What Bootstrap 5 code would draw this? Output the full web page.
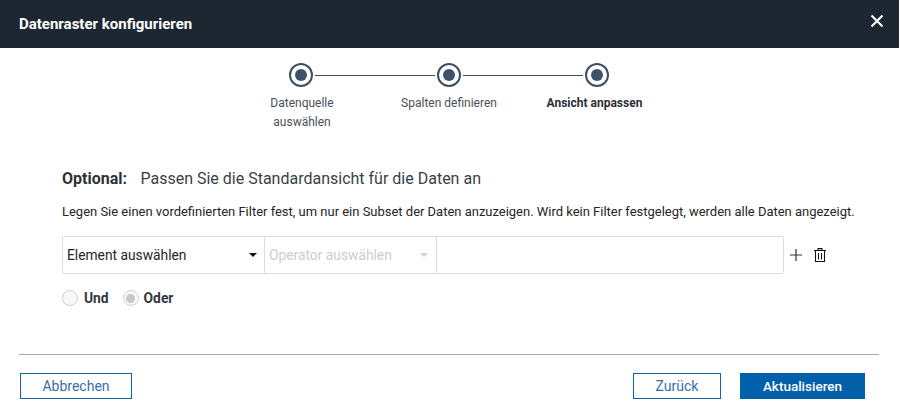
<!DOCTYPE html>
<html lang="de">
<head>
<meta charset="utf-8">
<title>Datenraster konfigurieren</title>
<link href="https://cdn.jsdelivr.net/npm/bootstrap@5.3.0/dist/css/bootstrap.min.css" rel="stylesheet">
<style>
html,body{height:416px;overflow:hidden;background:#fff}
body{font-family:Roboto,"Liberation Sans",sans-serif;color:#252525;width:899px}
.dlg-head{height:48px;background:#1d2731;color:#fff;padding:0 14px 0 19px}
.dlg-title{font-size:15px;font-weight:700;margin:0;line-height:48px}
.dlg-x{background:none;border:0;padding:0;width:16px;height:16px;line-height:0;margin-top:-6px}
.stepper{width:444px;margin:14px 0 0 227px}
.step-col{width:148px;font-size:12px;line-height:19px;color:#4a5057;text-align:center;flex:none}
.step-dot{width:24px;height:24px;border:2px solid #3d4f5f;border-radius:50%;background:#fff;padding:4px;margin:1px auto 7px;position:relative;z-index:1;box-shadow:0 0 0 2px #fff}
.step-dot i{display:block;width:12px;height:12px;border-radius:50%;background:#3d5268}
.step-bar{position:relative}
.step-bar::after{content:"";position:absolute;left:74px;width:296px;top:13px;height:1px;background:#3d4f5f}
.step-col.on{font-weight:700;color:#2b2f33}
.lbl-a{margin-right:-2px}
.lbl-c{margin-left:-5px}
.dlg-body{padding:0 62px}
.opt-line{font-size:16px;line-height:20px;margin-top:37px;color:#3a3f45}
.opt-line b{color:#2e3338;margin-right:9.5px}
.desc{font-size:12.97px;line-height:18px;margin-top:14px;color:#252525;white-space:nowrap}
.filter{margin-top:15px;height:38px}
.filter-box{width:722px;height:38px;border:1px solid #dcdfe2;border-radius:2px}
.fcell{height:100%;font-size:13.8px;padding:0 5px 0 4px;color:#252525}
.fcell+.fcell{border-left:1px solid #dcdfe2}
.f1{width:201px}
.f2{width:172px;color:#c9cfd4}
.f3{flex:1}
.caret{width:0;height:0;border-left:4px solid transparent;border-right:4px solid transparent;border-top:4px solid #111;margin-right:2px}
.f2 .caret{border-top-color:#c9cfd4;margin-right:3px}
.tools{margin-left:6px;gap:12px}
.radios{margin-top:14px;font-size:13.8px;font-weight:700;line-height:20px;color:#33383d;gap:14px}
.rd{width:16px;height:16px;border:1px solid #d2d2d2;border-radius:50%;background:#f8f8f8;margin-right:5px;display:flex;align-items:center;justify-content:center}
.rd.r1{margin-right:6px}
.rd i{display:block;width:9px;height:9px;border-radius:50%;background:#c8c8c8}
.rule{height:1px;background:#a9a9a9;margin:46px 20px 0 19px}
.foot{padding:18px 34px 0 20px}
.bt{border-radius:0;height:26px;padding:0;font-size:14px;line-height:24px;border:1px solid #0f62a8;color:#3b6fa5;background:#fff}
.bt.w1{width:112px}
.bt.w2{width:88px;margin-right:19px}
.bt.w3{width:125px;background:#0060a9;border-color:#0060a9;color:#fff;font-weight:500;font-size:13.5px}
</style>
</head>
<body>
<header class="dlg-head d-flex justify-content-between align-items-center">
  <h1 class="dlg-title">Datenraster konfigurieren</h1>
  <button class="dlg-x" type="button" aria-label="Schließen"><svg width="16" height="16" viewBox="0 0 16 16"><path d="M2.5 2.5l11 11M13.5 2.5l-11 11" stroke="#fff" stroke-width="2" fill="none"/></svg></button>
</header>
<div class="stepper step-bar d-flex">
  <div class="step-col"><div class="step-dot"><i></i></div><div class="lbl-a">Datenquelle<br>auswählen</div></div>
  <div class="step-col"><div class="step-dot"><i></i></div>Spalten definieren</div>
  <div class="step-col on"><div class="step-dot"><i></i></div><div class="lbl-c">Ansicht anpassen</div></div>
</div>
<main class="dlg-body">
  <div class="opt-line"><b>Optional:</b> Passen Sie die Standardansicht für die Daten an</div>
  <div class="desc">Legen Sie einen vordefinierten Filter fest, um nur ein Subset der Daten anzuzeigen. Wird kein Filter festgelegt, werden alle Daten angezeigt.</div>
  <div class="filter d-flex align-items-center">
    <div class="filter-box d-flex">
      <div class="fcell f1 d-flex align-items-center justify-content-between"><span>Element auswählen</span><span class="caret"></span></div>
      <div class="fcell f2 d-flex align-items-center justify-content-between"><span>Operator auswählen</span><span class="caret"></span></div>
      <div class="fcell f3"></div>
    </div>
    <div class="tools d-flex align-items-center">
      <svg width="12" height="12" viewBox="0 0 12 12"><path d="M6 0v12M0 6h12" stroke="#333" stroke-width="1.2" fill="none"/></svg>
      <svg width="12" height="14" viewBox="0 0 12 14" fill="none" stroke="#111" stroke-width="1.1"><path d="M0 2.5h12M4 2.5V.6h4v1.9M1.5 2.5v11h9v-11M4.5 5v6.5M7.5 5v6.5"/></svg>
    </div>
  </div>
  <div class="radios d-flex align-items-center">
    <div class="d-flex align-items-center"><span class="rd r1"></span>Und</div>
    <div class="d-flex align-items-center"><span class="rd"><i></i></span>Oder</div>
  </div>
</main>
<div class="rule"></div>
<footer class="foot d-flex justify-content-between">
  <button class="bt w1" type="button">Abbrechen</button>
  <div class="d-flex">
    <button class="bt w2" type="button">Zurück</button>
    <button class="bt w3" type="button">Aktualisieren</button>
  </div>
</footer>
</body>
</html>
